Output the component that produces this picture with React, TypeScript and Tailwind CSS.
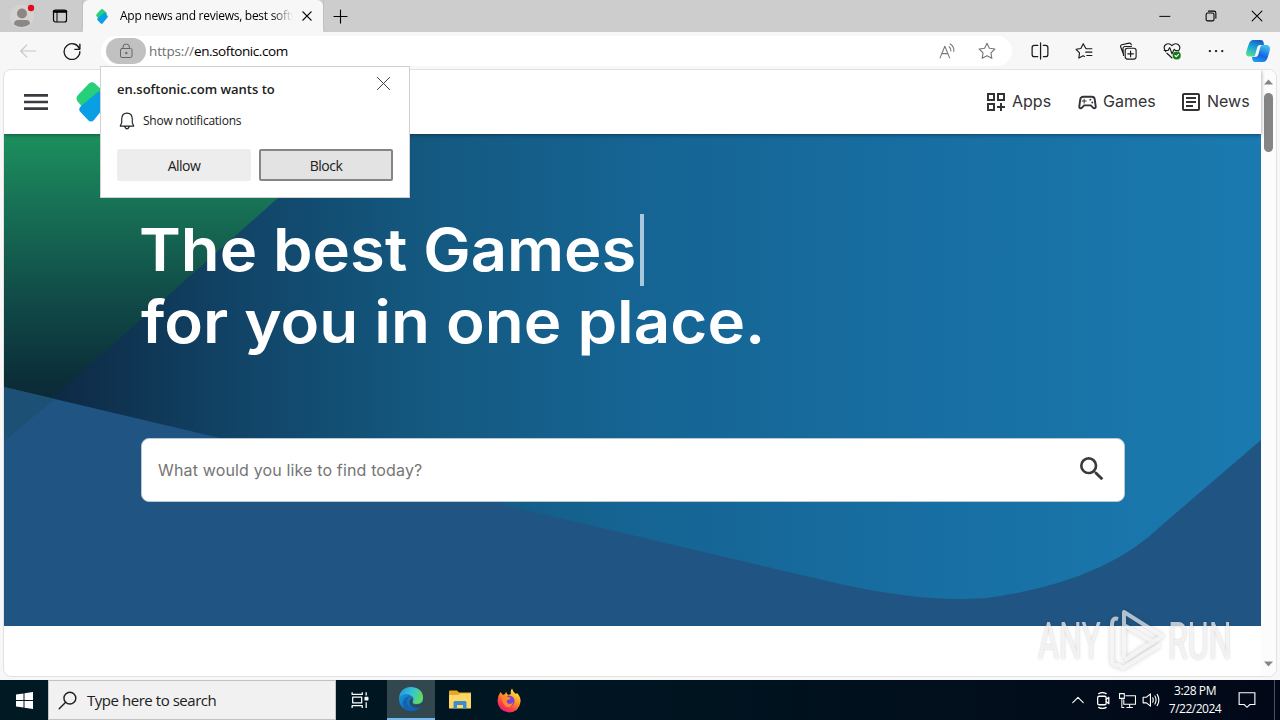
import type { ReactNode } from "react";
import { MdMenu, MdSearch, MdOutlineSportsEsports, MdOutlineArticle } from "react-icons/md";

function Icon({ size = 16, className = "", children }: { size?: number; className?: string; children: ReactNode }) {
  return (
    <svg width={size} height={size} viewBox="0 0 16 16" fill="none" stroke="currentColor" strokeWidth="1" strokeLinecap="round" strokeLinejoin="round" className={"block shrink-0 " + className}>
      {children}
    </svg>
  );
}

function SoftonicLogo({ className }: { className: string }) {
  return (
    <svg viewBox="0 0 32 40" className={"block shrink-0 " + className}>
      <path d="M13 1.500Q16 -1 19 1.500L28 10Q30 12.500 28 15L11 30L2 20Q-1 16.500 2 13Z" fill="#26cf78" />
      <path d="M5 24L23 9L30 17Q33 20 30 23L18 38Q15 41 12 38L4 29.500Q2 27 5 24Z" fill="#0a9ee4" />
    </svg>
  );
}

function TabStrip() {
  return (
    <div className="flex h-8 bg-[#cdcdcd]">
      <div className="flex w-[83px] items-center rounded-br-md border-r border-[#c0c0c0] bg-[#cccccc]">
        <svg width="26" height="26" viewBox="0 0 26 26" className="ml-[9px] block">
          <circle cx="13" cy="13.500" r="12" fill="#d5d2d0" />
          <circle cx="13" cy="10.500" r="5" fill="#8b8785" />
          <path d="M5 21.500Q5 17 9 17H17Q21 17 21 21Q17 24 13 24T5 21.500Z" fill="#8b8785" />
          <circle cx="22" cy="5" r="3.200" fill="#e00b1c" />
        </svg>
        <Icon className="ml-[17px] text-black">
          <rect x="1.500" y="2" width="13" height="12" rx="2" strokeWidth="1.200" />
          <path d="M2 3.500H14" strokeWidth="2.500" />
          <path d="M5 4V13.500" />
        </Icon>
      </div>
      <div className="flex w-[240px] items-center rounded-t-md bg-[#f7f7f7]">
        <SoftonicLogo className="ml-[13px] h-[15px] w-[12px]" />
        <div className="ml-[12px] w-[173px] bg-linear-to-r from-black from-88% to-transparent bg-clip-text text-[12px] leading-5 whitespace-nowrap text-transparent">
          <span className="tracking-[-0.270px]">App news and reviews, best softw</span>
        </div>
        <Icon size={12} className="ml-[8px] text-black">
          <path d="M2.500 2.500L13.500 13.500M13.500 2.500L2.500 13.500" strokeWidth="1.700" />
        </Icon>
      </div>
      <div className="flex flex-1 items-center rounded-bl-md border-l border-[#c0c0c0]">
        <Icon size={15} className="ml-[9px] text-black">
          <path d="M8 1V15M1 8H15" strokeWidth="1.200" />
        </Icon>
      </div>
      <div className="flex items-center text-black">
        <Icon size={12} className="mr-[34px]">
          <path d="M1 8.500H14.500" strokeWidth="1.300" />
        </Icon>
        <Icon size={12} className="mr-[34px]">
          <rect x="1.500" y="4" width="10.500" height="10.500" rx="2" strokeWidth="1.400" />
          <path d="M4.500 1.500H12Q14.500 1.500 14.500 4V11" strokeWidth="1.400" />
        </Icon>
        <Icon size={12} className="mr-[17px]">
          <path d="M1.500 1.500L14.500 14.500M14.500 1.500L1.500 14.500" strokeWidth="1.400" />
        </Icon>
      </div>
    </div>
  );
}

function Copilot() {
  return (
    <svg width="26" height="26" viewBox="0 0 26 26" className="block">
      <defs>
        <linearGradient id="cpA" x1="0.600" y1="0" x2="0.200" y2="1">
          <stop offset="0" stopColor="#1a5fc4" />
          <stop offset="0.450" stopColor="#16a6d8" />
          <stop offset="1" stopColor="#5ce08c" />
        </linearGradient>
        <linearGradient id="cpB" x1="0.700" y1="0" x2="0.300" y2="1">
          <stop offset="0" stopColor="#3cc5f0" />
          <stop offset="0.600" stopColor="#1763e0" />
          <stop offset="1" stopColor="#1b9df0" />
        </linearGradient>
      </defs>
      <path d="M8 2H16Q18 2 18.500 4L19 7H15Q13 7 12.300 9L10 17.500Q9.500 18.500 8 18.500H4Q1 18.500 1 15Q3 8 4.200 5Q5.500 2 8 2Z" fill="url(#cpA)" />
      <path d="M18 24H10Q8 24 7.500 22L7 19H10Q12.500 19 13.200 17L15.500 8.500Q16 7 18 7H22Q25 7.500 25 11Q23.500 18 22 21Q20.800 24 18 24Z" fill="url(#cpB)" />
    </svg>
  );
}

function Toolbar() {
  return (
    <div className="flex h-[37px] items-center bg-[#f7f7f7] pt-px">
      <Icon size={18} className="ml-[19px] text-[#c6c6c6]">
        <path d="M15 8H1.500M7 2.500L1.500 8L7 13.500" />
      </Icon>
      <Icon size={18} className="ml-[26px] text-[#1b1b1b]">
        <path d="M14.700 6.500A7 7 0 1 0 15 8.500M15 2V6.500H10.500" strokeWidth="1.200" />
      </Icon>
      <div className="ml-[20px] flex h-[30px] w-[911px] items-center rounded-full bg-white">
        <div className="ml-[5px] flex h-[26px] w-10 items-center justify-center rounded-full bg-[#c1c1c1] text-[#666]">
          <Icon size={16}>
            <rect x="2.500" y="5.500" width="11.500" height="9" rx="1.500" />
            <path d="M5 5.500V4Q5 1 8.200 1T11.400 4V5.500" />
            <circle cx="8.200" cy="10" r="0.700" fill="currentColor" />
          </Icon>
        </div>
        <div className="ml-[3px] flex-1 text-[13.500px] leading-5 whitespace-nowrap text-black">
          <span className="inline-block w-[45px] tracking-[-0.150px] text-[#6e6e6e]">https://</span>
          <span className="tracking-[-0.430px]">en.softonic.com</span>
        </div>
        <Icon size={17} className="text-[#767676]">
          <path d="M1 14L5.500 3L10 14M2.700 10H8.300M9.500 3.500Q11.500 5 11.300 7.500M10.500 1Q14.500 3.500 14 8" />
        </Icon>
        <Icon size={18} className="mr-[16px] ml-[22px] text-[#767676]">
          <path d="M8 1.200L10.100 5.600L15 6.200L11.500 9.600L12.300 14.500L8 12.200L3.700 14.500L4.500 9.600L1 6.200L5.900 5.600Z" />
        </Icon>
      </div>
      <div className="ml-[19px] flex items-center gap-[26px] text-[#1a1a1a]">
        <Icon size={18}>
          <path d="M8.500 0.800V15.200M6 3H3Q1 3 1 5V11Q1 13 3 13H6M11 3H13Q15 3 15 5V11Q15 13 13 13H11" strokeWidth="1.100" />
        </Icon>
        <Icon size={18}>
          <path d="M9.500 5.600L7.300 1.500L5.200 5.800L1 6.500L4 9.700L3.400 14.300L7.300 12.300L8.500 13M10 6H15M9.500 9H15M10.500 12H15" />
        </Icon>
        <Icon size={18}>
          <path d="M3.800 10.500L1.500 4.500Q1 3 2.500 2.500L9 1Q10.500 0.700 11 2.500M4 12L3.500 5.500Q3.500 4.500 5 4H11" />
          <rect x="5.500" y="5.500" width="9.700" height="9.700" rx="2" fill="#f7f7f7" />
          <path d="M10.300 8V13M7.800 10.500H12.800" />
        </Icon>
        <Icon size={18}>
          <path d="M2.500 8.500Q-0.500 4.500 2.500 2.200Q5.500 0.500 8 3.200Q10.500 0.500 13.500 2.200Q16.300 4.500 13.800 8M3.500 10L8 14.200M1 7.500H4.500L6 5L8 10.500L10 6.500L11 7.500H13" />
          <circle cx="12.200" cy="12" r="3.600" fill="#147a16" stroke="none" />
          <path d="M10.700 12L11.800 13.100L13.800 11" stroke="white" />
        </Icon>
        <Icon size={18}>
          <path d="M2.500 8H2.600M8 8H8.100M13.500 8H13.600" strokeWidth="2" />
        </Icon>
      </div>
      <div className="ml-[20px]">
        <Copilot />
      </div>
    </div>
  );
}

function SiteHeader() {
  return (
    <header className="relative z-10 flex h-16 items-center bg-white font-[Inter,sans-serif] text-[16px] text-[#3a3a3a] shadow-[0_1px_4px_rgba(0,0,0,0.400)]">
      <MdMenu className="ml-[16px] size-8 text-[#3a3a40]" />
      <SoftonicLogo className="ml-[24px] h-10 w-8" />
      <nav className="ml-auto flex items-center pr-[12px] text-[#333336]">
        <svg width="20" height="20" viewBox="0 0 20 20" fill="none" stroke="#333336" strokeWidth="2" className="mr-[6px]">
          <path d="M2 2H8V8H2ZM12 2H18V8H12ZM2 12H8V18H2ZM15 11V19M11 15H19" />
        </svg>
        <span className="w-[64px] pb-0.5">Apps</span>
        <MdOutlineSportsEsports className="mr-[4px] size-[23px]" />
        <span className="w-[76px] pb-0.5">Games</span>
        <MdOutlineArticle className="mr-[4px] size-6" />
        <span className="w-[42px] pb-0.5">News</span>
      </nav>
    </header>
  );
}

function HeroArt() {
  return (
    <svg width="1257" height="492" viewBox="0 0 1257 492" className="absolute inset-0 block">
      <defs>
        <linearGradient id="sea" x1="0" x2="1" y1="0" y2="0">
          <stop offset="0" stopColor="#0c2437" />
          <stop offset="0.060" stopColor="#0e2d49" />
          <stop offset="0.180" stopColor="#114366" />
          <stop offset="0.330" stopColor="#14587f" />
          <stop offset="0.500" stopColor="#156493" />
          <stop offset="0.750" stopColor="#186fa3" />
          <stop offset="1" stopColor="#1a7aaf" />
        </linearGradient>
        <linearGradient id="leaf" x1="0" x2="0" y1="0" y2="1">
          <stop offset="0" stopColor="#1c905d" />
          <stop offset="0.200" stopColor="#187556" />
          <stop offset="0.500" stopColor="#114f4a" />
          <stop offset="0.820" stopColor="#0b2c38" />
          <stop offset="1" stopColor="#0b2634" />
        </linearGradient>
      </defs>
      <rect width="1257" height="492" fill="url(#sea)" />
      <path d="M0 0H346L0 307Z" fill="url(#leaf)" />
      <path d="M0 253L636 403L836 450Q910 466 960 465L983 464Q1100 448 1158 391L1257 306V492H0Z" fill="#205583" />
      <path d="M0 253L51 265L0 307Z" fill="#1d5075" />
    </svg>
  );
}

function Hero() {
  return (
    <section className="relative h-[492px] overflow-hidden">
      <HeroArt />
      <div className="relative px-[137px] pt-[80px]">
        <h1 className="font-[Inter,sans-serif] text-[59px] leading-[72px] font-semibold whitespace-nowrap text-white">
          <span className="flex">
            <span className="-ml-[2px] w-[501px]"><span className="inline-block origin-left scale-x-[1.074]">The best Games</span></span>
            <span className="h-[72px] w-1 bg-[#a9c8dc]" />
          </span>
          <span className="inline-block origin-left scale-x-[1.079]">for you in one place.</span>
        </h1>
        <div className="mt-[80px] flex h-16 w-[984px] items-center justify-between rounded-lg border border-[#b8c8d0] bg-white pr-4 pl-4 font-[Inter,sans-serif] text-[16px] text-[#757575]">
          <span className="tracking-[0.150px]">What would you like to find today?</span>
          <MdSearch className="size-8 -translate-y-px text-[#3a3a3a]" />
        </div>
      </div>
    </section>
  );
}

function Scrollbar() {
  return (
    <div className="flex w-[15px] flex-col items-center bg-[#fcfcfc]">
      <svg width="9" height="6" viewBox="0 0 9 6" className="mt-[9px] mb-[8px] block"><path d="M0 5.500L4.500 0.500L9 5.500Z" fill="#858585" /></svg>
      <div className="h-[59px] w-[9px] rounded-full bg-[#858585]" />
      <svg width="9" height="6" viewBox="0 0 9 6" className="mt-auto mb-[9px] block"><path d="M0 0.500L4.500 5.500L9 0.500Z" fill="#858585" /></svg>
    </div>
  );
}

function PermissionPrompt() {
  return (
    <div className="absolute top-[66px] left-[100px] z-20 flex h-[132px] w-[310px] flex-col border border-[#d0d0d0] bg-white px-4 text-[#202020]">
      <div className="flex h-[36px] justify-between pt-[12px]">
        <span className="text-[13px] leading-5 font-semibold whitespace-nowrap">en.softonic.com wants to</span>
        <Icon size={15} className="mt-[-3px] mr-[2px] text-[#333]">
          <path d="M1.500 1.500L14.500 14.500M14.500 1.500L1.500 14.500" />
        </Icon>
      </div>
      <div className="flex h-[36px] items-center text-[12px]">
        <Icon size={18} className="ml-[1px]">
          <path d="M2 12.500L3.300 9.500V6.200Q3.500 1 8 1T12.700 6.200V9.500L14 12.500ZM6 13Q8 17 10 13" />
        </Icon>
        <span className="ml-[7px] tracking-[-0.240px] whitespace-nowrap">Show notifications</span>
      </div>
      <div className="mt-[10px] flex gap-2 text-[14px] tracking-[-0.500px]">
        <div className="flex h-8 w-[134px] items-center justify-center rounded-[2px] bg-[#ededed]"><span>Allow</span></div>
        <div className="flex h-8 w-[134px] items-center justify-center rounded-[2px] border-2 border-[#858585] bg-[#e3e3e3]"><span>Block</span></div>
      </div>
    </div>
  );
}

function Watermark() {
  return (
    <div className="absolute top-[608px] left-[1038px] z-20 flex h-16 w-[198px] items-center font-[Roboto,sans-serif] text-[52px] leading-none font-normal text-white/70 [text-shadow:0_0_3px_rgba(0,0,0,0.220)]">
      <div className="w-[70px] pt-[4px]"><span className="inline-block origin-left scale-x-[0.620]">ANY</span></div>
      <svg width="60" height="64" viewBox="0 0 60 64" fill="none" stroke="white" strokeOpacity="0.650" strokeWidth="4" strokeLinejoin="round" className="block shrink-0 drop-shadow-[0_0_2px_rgba(0,0,0,0.300)]">
        <path d="M16 50V4L54 28L17 52M16 17L47 35M4 52V17Q4 9 10 11M4 52Q4 58 10 57L15 60L52 37" />
      </svg>
      <div className="w-[66px] pt-[4px]"><span className="inline-block origin-left scale-x-[0.620]">RUN</span></div>
    </div>
  );
}

function EdgeLogo() {
  return (
    <svg width="26" height="26" viewBox="0 0 26 26">
      <defs>
        <linearGradient id="edTop" x1="0" x2="1" y1="0.200" y2="0.600">
          <stop offset="0" stopColor="#2494dc" />
          <stop offset="0.500" stopColor="#36c5d2" />
          <stop offset="1" stopColor="#65dc56" />
        </linearGradient>
        <linearGradient id="edLow" x1="0" x2="1" y1="0" y2="1">
          <stop offset="0" stopColor="#1da1e5" />
          <stop offset="1" stopColor="#0c4d9e" />
        </linearGradient>
      </defs>
      <circle cx="13" cy="13" r="12" fill="url(#edLow)" />
      <path d="M1.200 11Q3 1 13 1Q25 2 25 12Q25 18 18 18Q14 18 15 15Q17 12 13 9.500Q7 6 1.200 11Z" fill="url(#edTop)" />
      <path d="M13.500 10Q8 12 9 17Q11 23 17 22.500Q21 22.500 23.500 19Q20 26 12 25Q4 23 5 16Q6.500 10 13.500 10Z" fill="#1261b5" />
      <path d="M14.500 14.500Q13 19 18 18.800Q21.500 19 24.500 16.500Q24 20 22 21Q14 23 11.500 17Q11 14 14 12Z" fill="#33474f" />
    </svg>
  );
}

function FirefoxLogo() {
  return (
    <svg width="24" height="25" viewBox="0 0 24 25">
      <defs>
        <linearGradient id="fx" x1="0.800" x2="0.200" y1="0" y2="1">
          <stop offset="0" stopColor="#fff04a" />
          <stop offset="0.400" stopColor="#ff9a1f" />
          <stop offset="0.700" stopColor="#ff4048" />
          <stop offset="1" stopColor="#e31587" />
        </linearGradient>
      </defs>
      <path d="M3.500 4L6 7L8 6L9 4L11 7L14 6Q13 3 15 0.500Q16 4 19 6L20 5Q24 9 23.500 14Q22 24 12 24.500Q1 23 0.500 13Q0.500 8 3.500 4Z" fill="url(#fx)" />
      <circle cx="12" cy="13" r="5.500" fill="#7443d8" />
      <path d="M5 8Q9 7 11 9L14 10Q12 12 10 12Q9 15 12 16Q15 16 16 14Q15 20 10 19Q5 17 5 8Z" fill="#ff8a24" />
    </svg>
  );
}

function Taskbar() {
  return (
    <div className="flex h-10 items-center bg-linear-to-r from-[#001923] via-[#001521] to-[#020817] text-white">
      <div className="flex w-12 justify-center">
        <svg width="17" height="17" viewBox="0 0 17 17" fill="white"><path d="M0 2.500L7.500 1.400V8H0ZM8.500 1.200L17 0V8H8.500ZM0 9H7.500V15.600L0 14.500ZM8.500 9H17V17L8.500 15.800Z" /></svg>
      </div>
      <div className="flex h-10 w-[288px] items-center border border-[#bfc3c5] bg-[#f1f1f1] text-[15px] text-[#202020]">
        <Icon size={19} className="ml-[9px]">
          <circle cx="10" cy="6" r="5" strokeWidth="1.200" /><path d="M6.500 9.500L1 15" strokeWidth="1.200" />
        </Icon>
        <span className="ml-[10px] tracking-[-0.460px] whitespace-nowrap">Type here to search</span>
      </div>
      <div className="flex w-[51px] justify-center pr-[3px]">
        <Icon size={18}>
          <path d="M1 1V3H10V1M1 15V13H10V15M1.500 5.500H9.500V10.500H1.500ZM13.500 1V4M13.500 10V15" strokeLinecap="butt" strokeWidth="1.100" />
          <path d="M12.500 5.500H15V8H12.500Z" fill="white" />
        </Icon>
      </div>
      <div className="flex h-10 w-12 items-center justify-center border-b-2 border-[#76b9ed] bg-[#33474f]"><EdgeLogo /></div>
      <div className="flex w-[49px] justify-center">
        <svg width="22" height="20" viewBox="0 0 22 20">
          <path d="M0 1.500Q0 0.500 1 0.500H8L10 2.500H22V18H0Z" fill="#e9a723" />
          <path d="M0 5H9L11 3.500H22V18.500H0Z" fill="#ffd766" />
          <path d="M4.500 19V12.500Q4.500 11 6 11H16Q17.500 11 17.500 12.500V19H14V15H8V19Z" fill="#3c8dcc" />
        </svg>
      </div>
      <div className="flex w-[50px] justify-center"><FirefoxLogo /></div>
      <div className="ml-auto flex h-10 items-center">
        <Icon size={14} className="mr-[10px]"><path d="M2 11L8 5L14 11" strokeWidth="1.300" /></Icon>
        <Icon size={17} className="mr-[7px]">
          <rect x="2.500" y="4" width="8" height="8" rx="1.500" strokeWidth="1.200" />
          <path d="M10.500 7L13 5V11L10.500 9M3.500 1.500Q7 -0.500 10.500 1.500M3.500 14.500Q7 16.500 10.500 14.500" strokeWidth="1.200" />
        </Icon>
        <Icon size={17} className="mr-[6px]">
          <path d="M6 3.500H15.500V11.500H4.500V7M10 11.500V14.500M7 14.500H13M0.500 1.500H5V6H0.500ZM2.700 6V14.500H5" strokeLinecap="butt" />
        </Icon>
        <Icon size={18} className="mr-[9px]">
          <path d="M1 5.500H4L7.500 2.500V13.500L4 10.500H1ZM9.500 6Q10.500 8 9.500 10M11.500 4.500Q13.500 8 11.500 11.500M13.500 3Q16.500 8 13.500 13" />
        </Icon>
        <div className="flex w-[52px] flex-col items-center text-[12px] leading-[18px] whitespace-nowrap">
          <span className="tracking-[-0.400px]">3:28 PM</span>
          <span className="tracking-[-0.500px]">7/22/2024</span>
        </div>
        <Icon size={18} className="mr-[18px] ml-[17px]"><path d="M1 1.500H15V12H10.500L8 14.500L5.500 12H1Z" strokeLinejoin="miter" /></Icon>
        <div className="h-10 w-[6px] border-l border-[#4a5262]" />
      </div>
    </div>
  );
}

export default function App() {
  return (
    <div className="relative flex h-[720px] w-[1280px] flex-col overflow-hidden bg-[#f7f7f7] font-['Open_Sans',sans-serif]">
      <TabStrip />
      <Toolbar />
      <main className="mx-[3px] mb-[3px] flex h-[608px] shrink-0 overflow-hidden rounded-lg border border-[#e2e2e2] bg-white">
        <div className="w-[1257px] shrink-0">
          <SiteHeader />
          <Hero />
        </div>
        <Scrollbar />
      </main>
      <Taskbar />
      <PermissionPrompt />
      <Watermark />
    </div>
  );
}
